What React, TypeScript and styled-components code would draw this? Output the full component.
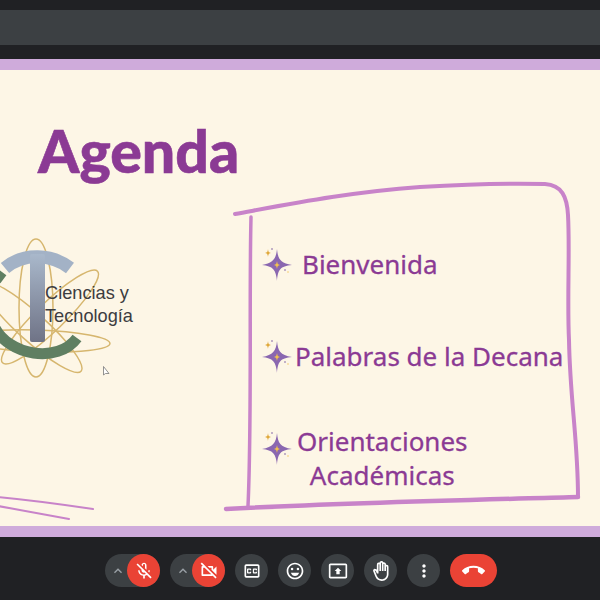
import React from "react";
import styled, { createGlobalStyle } from "styled-components";
import {
  MdOutlineMicOff,
  MdOutlineVideocamOff,
  MdOutlineClosedCaption,
  MdOutlineEmojiEmotions,
  MdOutlinePresentToAll,
  MdOutlineBackHand,
  MdMoreVert,
  MdCallEnd,
  MdKeyboardArrowUp,
} from "react-icons/md";

const Global = createGlobalStyle`
  html, body { margin: 0; padding: 0; background: #202124; }
  #root { width: 600px; height: 600px; overflow: hidden; }
`;

const Page = styled.div`
  width: 600px;
  height: 600px;
  display: flex;
  flex-direction: column;
  background: #202124;
  font-family: "Noto Sans", sans-serif;
`;

const TopBand = styled.div`
  margin-top: 10px;
  height: 35px;
  flex: none;
  background: #3c4043;
`;

const Presentation = styled.div`
  margin-top: 14px;
  height: 478px;
  flex: none;
  border-top: 11px solid #cfabdb;
  border-bottom: 11px solid #cfabdb;
  background: #fdf6e6;
  position: relative;
  overflow: hidden;
  box-sizing: border-box;
`;

const Art = styled.svg`
  position: absolute;
  left: 0;
  top: 0;
  width: 600px;
  height: 456px;
`;

const SlideBody = styled.div`
  position: relative;
  display: flex;
  flex-direction: column;
`;

const Title = styled.h1`
  margin: 41px 0 0 38px;
  font-family: Lato, sans-serif;
  font-size: 59px;
  line-height: 80px;
  font-weight: 900;
  color: #8b3a94;
  -webkit-text-stroke: 0.6px #8b3a94;
`;

const Columns = styled.div`
  display: flex;
  margin-top: 55px;
`;

const LogoText = styled.div`
  width: 261px;
  flex: none;
  box-sizing: border-box;
  padding: 36px 0 0 45px;
  font-family: "Liberation Sans", Arial, sans-serif;
  font-size: 18.200px;
  line-height: 23px;
  color: #3c3c40;
`;

const Items = styled.ul`
  list-style: none;
  margin: 0;
  padding: 0;
  display: flex;
  flex-direction: column;
`;

const Item = styled.li<{ $gap: number; $top: number }>`
  display: flex;
  align-items: flex-start;
  gap: ${(p) => p.$gap}px;
  margin-top: ${(p) => p.$top}px;
  font-size: 26px;
  font-weight: 400;
  line-height: 34px;
  color: #8b3a94;
  -webkit-text-stroke: 0.3px #8b3a94;
`;

const ItemText = styled.span<{ $down: number }>`
  text-align: center;
  margin-top: ${(p) => p.$down}px;
`;

const StarIcon = styled.svg`
  width: 32px;
  height: 36px;
  flex: none;
`;

const Toolbar = styled.div`
  flex: 1;
  display: flex;
  align-items: flex-start;
  padding: 17px 0 0 105px;
  gap: 10px;
`;

const Group = styled.div`
  width: 55px;
  height: 33px;
  border-radius: 17px;
  background: #3c4043;
  display: flex;
  align-items: center;
  justify-content: space-between;
  color: #9aa0a6;
  padding-left: 5px;
  box-sizing: border-box;
  font-size: 16px;
`;

const Round = styled.div<{ $danger?: boolean }>`
  width: 33px;
  height: 33px;
  border-radius: 50%;
  flex: none;
  display: flex;
  align-items: center;
  justify-content: center;
  background: ${(p) => (p.$danger ? "#ea4335" : "#3c4043")};
  color: #fff;
  font-size: 20px;
`;

const EndCall = styled.div`
  width: 47px;
  height: 33px;
  border-radius: 17px;
  background: #ea4335;
  display: flex;
  align-items: center;
  justify-content: center;
  color: #fff;
  font-size: 23px;
`;

const Star = () => (
  <StarIcon viewBox="0 0 32 36">
    <path d="M16 3 C17 13 19 17 31 19 C19 20 17 24 16 35 C15 24 12 20 1 19 C12 17 15 13 16 3Z" fill="#8a67b0" />
    <path d="M16 15 C16.5 18 17 18.5 19 19 C17 19.5 16.5 20 16 23 C15.500 20 15 19.500 13 19 C15 18.500 15.500 18 16 15Z" fill="#f2c14e" />
    <path d="M7 3 C7.300 6 8 6.500 10 7 C8 7.500 7.300 8 7 11 C6.700 8 6 7.500 4 7 C6 6.500 6.700 6 7 3Z" fill="#e0a93c" />
    <circle cx="11" cy="3" r="0.8" fill="#7a5aa0" />
    <circle cx="24" cy="24" r="0.8" fill="#7a5aa0" />
    <circle cx="27" cy="26" r="0.7" fill="#f2c14e" />
  </StarIcon>
);

export default function App() {
  return (
    <Page>
      <Global />
      <TopBand />
      <Presentation>
        <Art viewBox="0 70 600 456" fill="none">
          <defs>
            <linearGradient id="stem" x1="0" y1="0" x2="0" y2="1">
              <stop offset="0" stopColor="#a9b8cb" />
              <stop offset="1" stopColor="#6f7386" />
            </linearGradient>
          </defs>
          <g stroke="#d6b66e" strokeWidth="1.5">
            <ellipse cx="36" cy="308" rx="17" ry="69" />
            <ellipse cx="38" cy="341" rx="72" ry="11" transform="rotate(2 38 341)" />
            <ellipse cx="50" cy="317" rx="66" ry="14" transform="rotate(-44 50 317)" />
            <ellipse cx="32" cy="327" rx="66" ry="14" transform="rotate(42 32 327)" />
          </g>
          <path d="M-6 326 C8 356 58 364 77 338" stroke="#5f7f62" strokeWidth="11" />
          <path d="M-4 280 L2 272" stroke="#5f7f62" strokeWidth="11" />
          <path d="M5 268 C24 252 52 254 70 268" stroke="#a3b2c6" strokeWidth="13" />
          <rect x="30" y="254" width="15" height="88" rx="2" fill="url(#stem)" />
          <path d="M103.500 366.500 L103.500 375 L105.500 373.500 L109 373.500Z" fill="#fff" stroke="#777" strokeWidth="0.8" />
          <g stroke="#c883c9" strokeLinecap="round">
            <path strokeWidth="4" d="M235 214 C290 204 350 192 420 187 C470 184 510 183 545 184 C562 185 567 197 568 215 C570 250 567 300 569 340 C570 400 578 440 578 497" />
            <path strokeWidth="4.500" d="M578 497 C470 500 340 503 226 509" />
            <path strokeWidth="3.500" d="M251 217 C249 300 252 420 248 506" />
            <path strokeWidth="2" d="M-2 497 C30 500 60 504 93 509" />
            <path strokeWidth="2" d="M-2 506 C25 511 48 515 69 519" />
          </g>
        </Art>
        <SlideBody>
          <Title>Agenda</Title>
          <Columns>
            <Items as="ul" style={undefined}>
              <></>
            </Items>
            <LogoText>
              Ciencias y
              <br />
              Tecnología
            </LogoText>
            <Items>
              <Item $gap={9} $top={0}>
                <Star />
                <ItemText $down={1}>Bienvenida</ItemText>
              </Item>
              <Item $gap={2} $top={56}>
                <Star />
                <ItemText $down={1}>Palabras de la Decana</ItemText>
              </Item>
              <Item $gap={4} $top={56}>
                <Star />
                <ItemText $down={-6}>
                  Orientaciones
                  <br />
                  Académicas
                </ItemText>
              </Item>
            </Items>
          </Columns>
        </SlideBody>
      </Presentation>
      <Toolbar>
        <Group>
          <MdKeyboardArrowUp />
          <Round $danger>
            <MdOutlineMicOff />
          </Round>
        </Group>
        <Group>
          <MdKeyboardArrowUp />
          <Round $danger>
            <MdOutlineVideocamOff />
          </Round>
        </Group>
        <Round>
          <MdOutlineClosedCaption />
        </Round>
        <Round>
          <MdOutlineEmojiEmotions />
        </Round>
        <Round>
          <MdOutlinePresentToAll />
        </Round>
        <Round>
          <MdOutlineBackHand />
        </Round>
        <Round>
          <MdMoreVert />
        </Round>
        <EndCall>
          <MdCallEnd />
        </EndCall>
      </Toolbar>
    </Page>
  );
}
